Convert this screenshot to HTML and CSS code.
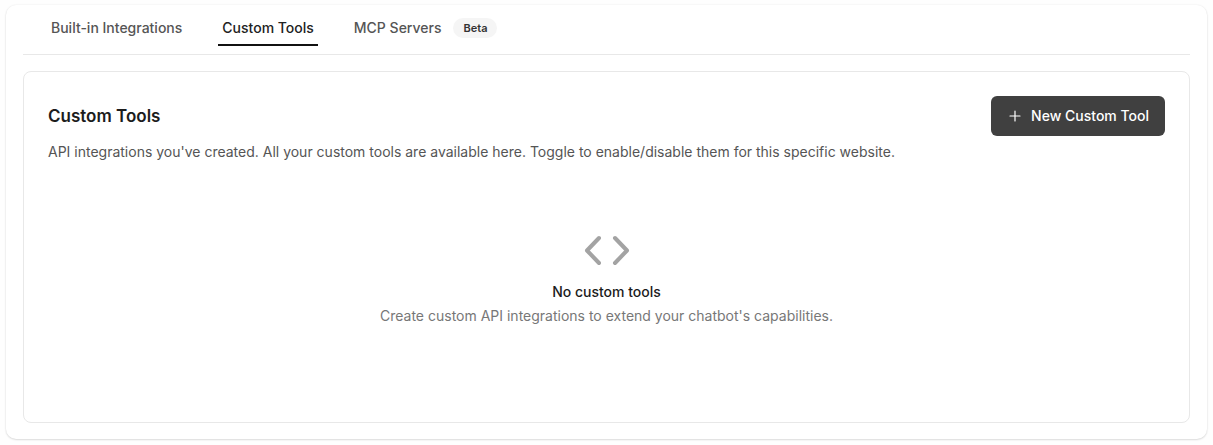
FILE: index.html
```
<!DOCTYPE html>
<html lang="en">
<head>
    <meta charset="UTF-8" />
    <meta name="viewport" content="width=device-width, initial-scale=1" />
    <title>Custom Tools</title>
    <link rel="stylesheet" href="styles.css">
</head>
<body>
    <main class="card">
        <nav class="tabs" aria-label="Integrations">
            <a href="#built-in" class="tab">Built-in Integrations</a>
            <a href="#custom-tools" class="tab active" aria-current="page">Custom Tools</a>
            <a href="#mcp" class="tab">MCP Servers <span class="badge">Beta</span></a>
        </nav>

        <section class="panel" aria-labelledby="panel-title">
            <header class="panel-header">
                <div class="panel-intro">
                    <h1 id="panel-title">Custom Tools</h1>
                    <p>API integrations you've created. All your custom tools are available here. Toggle to enable/disable them for this specific website.</p>
                </div>
                <button type="button" class="new-tool">
                    <svg width="16" height="16" viewBox="0 0 16 16" fill="none" stroke="currentColor" stroke-width="1.2" stroke-linecap="round" aria-hidden="true">
                        <path d="M8 3v10M3 8h10" />
                    </svg>
                    New Custom Tool
                </button>
            </header>

            <div class="empty">
                <svg class="empty-icon" width="48" height="48" viewBox="0 0 48 48" fill="none" stroke="currentColor" stroke-width="4" stroke-linecap="round" stroke-linejoin="round" aria-hidden="true">
                    <path d="M16 12L4 24.500L16 37M32 12L44 24.500L32 37" />
                </svg>
                <h2>No custom tools</h2>
                <p>Create custom API integrations to extend your chatbot's capabilities.</p>
            </div>
        </section>
    </main>
</body>
</html>
```

FILE: styles.css
```
* {
    box-sizing: border-box;
}
body {
    margin: 0;
    padding: 5px 6px 6px;
    font-family: Inter, "Liberation Sans", sans-serif;
    font-size: 14px;
    line-height: 20px;
    color: #1c1c1c;
    background: #fefefe;
}
h1, h2, p {
    margin: 0;
}

/* Card */
.card {
    padding: 0 17px 16px;
    background: #fff;
    border-radius: 10px;
    box-shadow: 0 0 2px rgba(0, 0, 0, 0.08), 0 1px 2px rgba(0, 0, 0, 0.12);
}

/* Tabs */
.tabs {
    display: flex;
    align-items: center;
    gap: 32px;
    padding: 6px 24px 8px;
    border-bottom: 1px solid #e8e8e8;
}
.tab {
    display: flex;
    align-items: center;
    gap: 12px;
    height: 35px;
    padding: 0 4px;
    border-bottom: 2px solid transparent;
    font-weight: 500;
    color: #555;
    text-decoration: none;
}
.tab.active {
    color: #222;
    border-bottom-color: #111;
}
.badge {
    padding: 0 10px;
    border-radius: 10px;
    background: #f5f5f5;
    font-size: 11px;
    font-weight: 600;
    color: #333;
}

/* Panel */
.panel {
    margin-top: 16px;
    padding: 24px 24px 96px;
    border: 1px solid #e8e8e8;
    border-radius: 8px;
}
.panel-header {
    display: flex;
    justify-content: space-between;
    align-items: flex-start;
    gap: 24px;
}
.panel-intro h1 {
    margin: 8px 0 14px;
    font-size: 17px;
    font-weight: 600;
    line-height: 24px;
}
.panel-intro p {
    color: #555;
}
.new-tool {
    display: flex;
    align-items: center;
    gap: 8px;
    height: 40px;
    padding: 0 16px;
    border: none;
    border-radius: 6px;
    background: #404040;
    font: inherit;
    font-weight: 500;
    color: #fff;
    white-space: nowrap;
    cursor: pointer;
}

/* Empty state */
.empty {
    display: flex;
    flex-direction: column;
    align-items: center;
    padding-top: 64px;
    text-align: center;
}
.empty-icon {
    margin-bottom: 8px;
    color: #a3a3a3;
}
.empty h2 {
    margin-bottom: 4px;
    font-size: 14px;
    font-weight: 500;
}
.empty p {
    color: #777;
}
```
